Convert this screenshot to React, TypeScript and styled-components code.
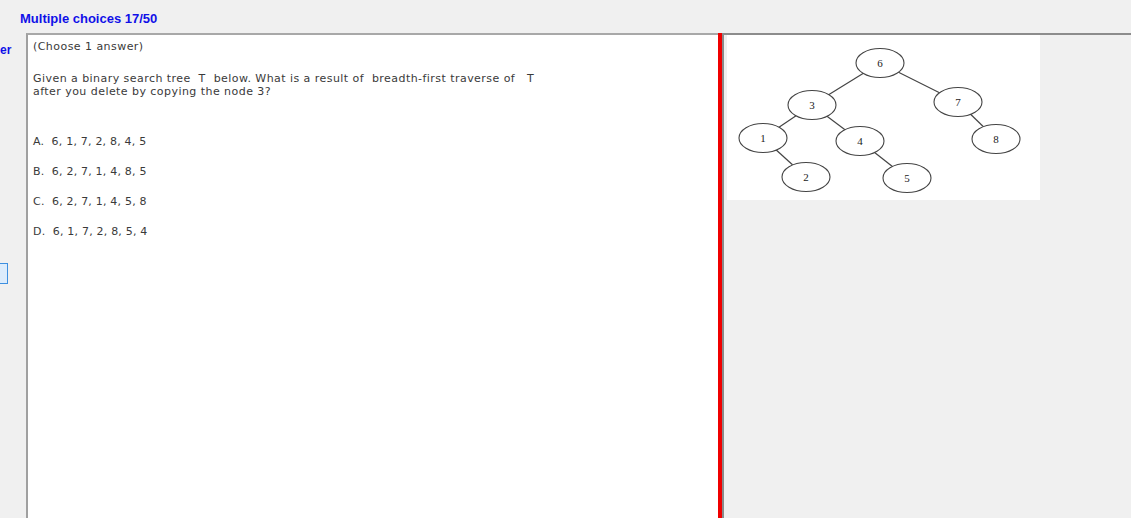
import React from "react";
import styled, { createGlobalStyle } from "styled-components";

const Global = createGlobalStyle`
  html, body { margin: 0; padding: 0; background: #f0f0f0; overflow: hidden; }
  body { font-family: "Liberation Sans", Arial, sans-serif; }
`;

const Page = styled.div`
  width: 1131px;
  height: 518px;
  display: flex;
  flex-direction: column;
  background: #f0f0f0;
`;

const Header = styled.div`
  height: 33px;
  display: flex;
  align-items: flex-start;
  padding-left: 20px;
  box-sizing: border-box;
`;

const Title = styled.div`
  margin-top: 11px;
  font-size: 13px;
  font-weight: bold;
  color: #1010e8;
`;

const Body = styled.div`
  flex: 1;
  display: flex;
  min-height: 0;
`;

const Gutter = styled.div`
  width: 26px;
  display: flex;
  flex-direction: column;
  flex-shrink: 0;
  overflow: hidden;
`;

const GutterLabel = styled.div`
  margin-top: 10px;
  margin-left: 0;
  font-size: 12px;
  font-weight: bold;
  color: #1010e8;
  line-height: 15px;
`;

const GutterBox = styled.div`
  margin-top: 205px;
  width: 7px;
  height: 19px;
  background: #dcecfc;
  border: 1px solid #3d8fe0;
  border-left: none;
`;

const QuestionPanel = styled.div`
  width: 692px;
  flex-shrink: 0;
  box-sizing: border-box;
  background: #ffffff;
  border-top: 2px solid #a8a8a8;
  border-left: 2px solid #a0a0a0;
  padding: 5px 0 0 5px;
  color: #3a3a3a;
  font-family: "DejaVu Sans", Verdana, sans-serif;
  font-size: 11px;
  display: flex;
  flex-direction: column;
`;

const Line = styled.div<{ $gap?: number }>`
  white-space: pre;
  line-height: 13px;
  letter-spacing: 0.45px;
  margin-top: ${(p) => p.$gap ?? 0}px;
`;

const Answers = styled.div`
  margin-top: 37px;
  display: flex;
  flex-direction: column;
  gap: 17px;
`;

const Answer = styled.div`
  white-space: pre;
  line-height: 13px;
  letter-spacing: 0.2px;
`;

const Splitter = styled.div`
  width: 4px;
  flex-shrink: 0;
  background: #f00000;
  border-right: 2px solid #8a8a8a;
`;

const ImagePanel = styled.div`
  flex: 1;
  border-top: 2px solid #8c8c8c;
  padding-left: 3px;
  display: flex;
  align-items: flex-start;
`;

const Picture = styled.svg`
  display: block;
  background: #ffffff;
  width: 313px;
  height: 165px;
`;

type N = { id: string; x: number; y: number };
const OX = 727;
const OY = 35;
const nodes: N[] = [
  { id: "6", x: 880, y: 63 },
  { id: "3", x: 812, y: 105 },
  { id: "7", x: 958, y: 102 },
  { id: "1", x: 763, y: 138 },
  { id: "4", x: 860, y: 141 },
  { id: "8", x: 996, y: 139 },
  { id: "2", x: 806, y: 177 },
  { id: "5", x: 907, y: 178 },
];
const edges: [string, string][] = [
  ["6", "3"],
  ["6", "7"],
  ["3", "1"],
  ["3", "4"],
  ["7", "8"],
  ["1", "2"],
  ["4", "5"],
];

const Tree = () => {
  const get = (id: string) => nodes.find((n) => n.id === id)!;
  return (
    <Picture viewBox="0 0 313 165">
      {edges.map(([a, b]) => {
        const p = get(a);
        const q = get(b);
        return (
          <line
            key={a + b}
            x1={p.x - OX}
            y1={p.y - OY}
            x2={q.x - OX}
            y2={q.y - OY}
            stroke="#444"
            strokeWidth={1.2}
          />
        );
      })}
      {nodes.map((n) => (
        <g key={n.id}>
          <ellipse
            cx={n.x - OX}
            cy={n.y - OY}
            rx={24}
            ry={14.5}
            fill="#fff"
            stroke="#444"
            strokeWidth={1.1}
          />
          <text
            x={n.x - OX}
            y={n.y - OY + 4}
            textAnchor="middle"
            fontFamily="'Liberation Serif', serif"
            fontSize="11"
            fill="#222"
          >
            {n.id}
          </text>
        </g>
      ))}
    </Picture>
  );
};

export default function App() {
  return (
    <Page>
      <Global />
      <Header>
        <Title>Multiple choices 17/50</Title>
      </Header>
      <Body>
        <Gutter>
          <GutterLabel>er</GutterLabel>
          <GutterBox />
        </Gutter>
        <QuestionPanel>
          <Line>(Choose 1 answer)</Line>
          <Line $gap={19}>{"Given a binary search tree  T  below. What is a result of  breadth-first traverse of   T"}</Line>
          <Line>after you delete by copying the node 3?</Line>
          <Answers>
            <Answer>A.  6, 1, 7, 2, 8, 4, 5</Answer>
            <Answer>B.  6, 2, 7, 1, 4, 8, 5</Answer>
            <Answer>C.  6, 2, 7, 1, 4, 5, 8</Answer>
            <Answer>D.  6, 1, 7, 2, 8, 5, 4</Answer>
          </Answers>
        </QuestionPanel>
        <Splitter />
        <ImagePanel>
          <Tree />
        </ImagePanel>
      </Body>
    </Page>
  );
}
